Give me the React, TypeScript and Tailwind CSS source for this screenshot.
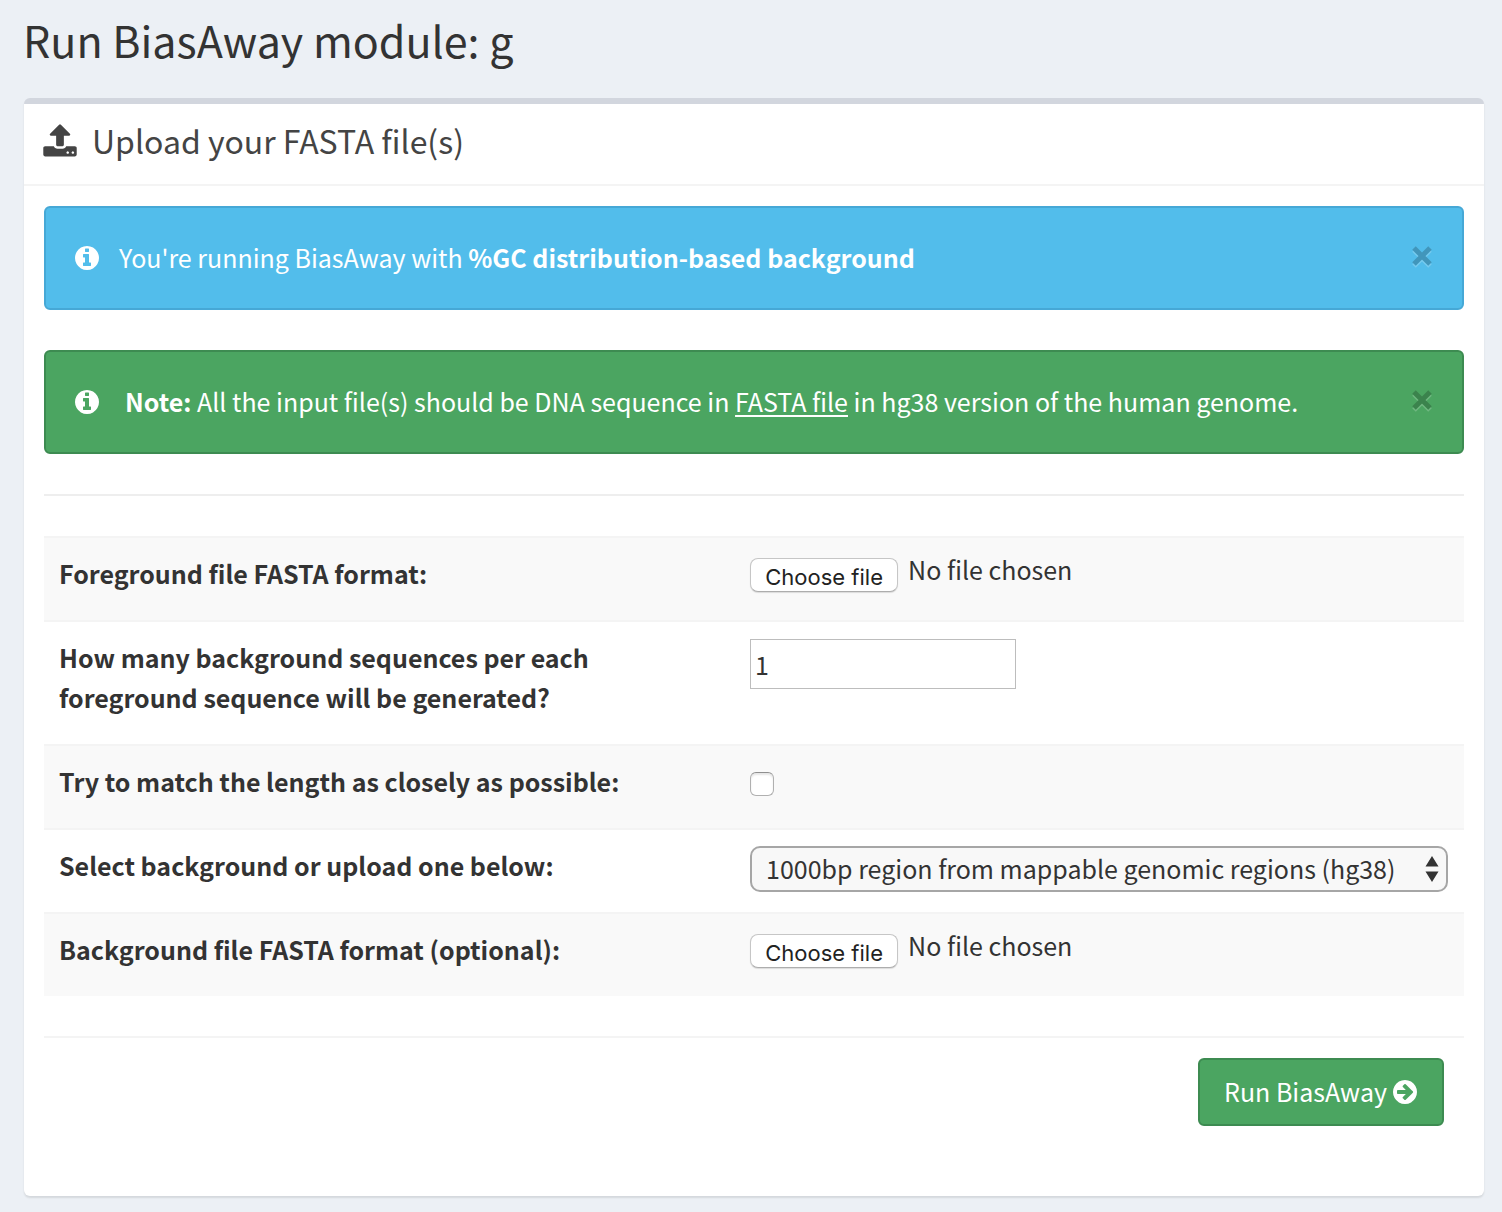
import { useRef, useState, type ReactNode } from "react";

const CIRCLE =
  "M1664 896q0 209-103 385.5t-279.5 279.5-385.5 103-385.5-103-279.5-279.5-103-385.5 103-385.5 279.5-279.5 385.5-103 385.5 103 279.5 279.5 103 385.5z";

const INFO =
  "M1152 1376v-160q0-14-9-23t-23-9h-96v-512q0-14-9-23t-23-9h-320q-14 0-23 9t-9 23v160q0 14 9 23t23 9h96v320h-96q-14 0-23 9t-9 23v160q0 14 9 23t23 9h448q14 0 23-9t9-23zM1024 480v-160q0-14-9-23t-23-9h-192q-14 0-23 9t-9 23v160q0 14 9 23t23 9h192q14 0 23-9t9-23z";

const ARROW =
  "M1413 896q0-27-18-45l-91-91-362-362q-18-18-45-18t-45 18l-91 91q-18 18-18 45t18 45l189 189h-502q-26 0-45 19t-19 45v128q0 26 19 45t45 19h502l-189 189q-19 19-19 45t19 45l91 91q18 18 45 18t45-18l362-362 91-91q18-18 18-45z";

const UPLOAD =
  "M1344 1472q0-26-19-45t-45-19-45 19-19 45 19 45 45 19 45-19 19-45zm256 0q0-26-19-45t-45-19-45 19-19 45 19 45 45 19 45-19 19-45zm128-224v320q0 40-28 68t-68 28h-1472q-40 0-68-28t-28-68v-320q0-40 28-68t68-28h427q21 56 70.5 92t110.5 36h256q61 0 110.5-36t70.5-92h427q40 0 68 28t28 68zm-325-648q-17 40-59 40h-256v448q0 26-19 45t-45 19h-256q-26 0-45-19t-19-45v-448h-256q-42 0-59-40-17-39 14-69l448-448q18-19 45-19t45 19l448 448q31 30 14 69z";

function Icon({ d, className }: { d: string; className: string }) {
  return (
    <svg viewBox="0 0 1792 1792" fill="currentColor" fillRule="evenodd" aria-hidden="true" className={className}>
      <path d={d} />
    </svg>
  );
}

function Alert({ tone, children }: { tone: string; children: ReactNode }) {
  const [open, setOpen] = useState(true);
  if (!open) return null;
  return (
    <div
      role="alert"
      className={`mb-10 flex min-h-26 items-center rounded-md border-2 pr-7 pl-[27px] text-[25px] leading-10 text-white ${tone}`}
    >
      <Icon d={CIRCLE + INFO} className="size-7 shrink-0" />
      <div className="flex-1 pb-0.5">{children}</div>
      <button
        type="button"
        aria-label="Close"
        onClick={() => setOpen(false)}
        className="mb-1 cursor-pointer text-black opacity-20"
      >
        <svg viewBox="0 0 24 24" className="size-6 drop-shadow-[0_2px_0_#fff]" stroke="currentColor" strokeWidth="5" aria-hidden="true">
          <path d="M4 4l16 16M20 4L4 20" />
        </svg>
      </button>
    </div>
  );
}

function FilePicker({ id }: { id: string }) {
  const input = useRef<HTMLInputElement>(null);
  const [name, setName] = useState("No file chosen");
  return (
    <div className="flex items-start gap-[10px]">
      <input
        ref={input}
        id={id}
        type="file"
        className="hidden"
        onChange={(e) => setName(e.target.files?.[0]?.name ?? "No file chosen")}
      />
      <button
        type="button"
        onClick={() => input.current?.click()}
        className="mt-1 h-[34px] w-[148px] rounded-lg border border-[#c6c6c6] border-b-[#adadad] bg-white pt-[3px] font-[Inter,sans-serif] text-[22px] leading-7 text-[#222] shadow-[0_1px_1px_rgba(0,0,0,0.12)]"
      >
        Choose file
      </button>
      <span className="leading-[30px]">{name}</span>
    </div>
  );
}

function Row({ id, label, children }: { id: string; label: string; children: ReactNode }) {
  return (
    <tr className="border-t-2 border-[#f4f4f4] odd:bg-[#f9f9f9]">
      <th scope="row" className="pt-[15px] pr-4 pb-[17px] pl-[15px] text-left align-top font-bold">
        <label htmlFor={id} className="mb-[10px] block max-w-[600px] leading-10">
          {label}
        </label>
      </th>
      <td className="p-4 align-top">{children}</td>
    </tr>
  );
}

export default function App() {
  return (
    <main className="min-h-screen bg-[#ecf0f5] pt-[13px] pr-[18px] pb-4 pl-6 font-['Noto_Sans_CJK_SC',sans-serif] text-[25px] text-[#333]">
      <h1 className="mb-[33px] -ml-px text-[43px] leading-[52px]">Run BiasAway module: g</h1>
      <section className="rounded-md border-t-6 border-[#d2d6de] bg-white shadow-[0_2px_2px_rgba(0,0,0,0.1)]">
        <header className="flex h-[82px] items-center gap-[14px] border-b-2 border-[#f4f4f4] px-[18px] pb-[6px] text-[#444]">
          <Icon d={UPLOAD} className="size-9" />
          <h2 className="pb-0.5 text-[32px] leading-9">Upload your FASTA file(s)</h2>
        </header>
        <form className="px-5 pt-5 pb-[70px]" onSubmit={(e) => e.preventDefault()}>
          <Alert tone="border-[#46a8d6] bg-[#52bdeb]">
            <p className="pl-[18px]">
              You're running BiasAway with <b>%GC distribution-based background</b>
            </p>
          </Alert>
          <Alert tone="border-[#3d8b51] bg-[#4ba561]">
            <p className="pl-6">
              <b>Note:</b> All the input file(s) should be DNA sequence in{" "}
              <a href="#fasta" className="underline decoration-2 underline-offset-3">
                FASTA file
              </a>{" "}
              in hg38 version of the human genome.
            </p>
          </Alert>
          <hr className="mb-10 border-t-2 border-[#eee]" />
          <table className="mb-10 w-full table-fixed border-collapse">
            <colgroup>
              <col className="w-[48.6%]" />
              <col />
            </colgroup>
            <tbody>
              <Row id="foreground" label="Foreground file FASTA format:">
                <FilePicker id="foreground" />
              </Row>
              <Row id="count" label="How many background sequences per each foreground sequence will be generated?">
                <input
                  id="count"
                  type="text"
                  inputMode="numeric"
                  defaultValue="1"
                  className="mt-px block h-[50px] w-[266px] border border-[#bdbdbd] bg-white px-1 leading-10"
                />
              </Row>
              <Row id="length" label="Try to match the length as closely as possible:">
                <input
                  id="length"
                  type="checkbox"
                  className="mt-[10px] block size-6 appearance-none rounded-md border border-[#b0b0b0] border-t-[#8f8f8f] bg-white shadow-[inset_0_2px_2px_rgba(0,0,0,0.1)] checked:bg-[#3b82f6]"
                />
              </Row>
              <Row id="background" label="Select background or upload one below:">
                <div className="relative">
                  <select
                    id="background"
                    className="block h-[46px] w-full appearance-none rounded-[10px] border-2 border-[#a6a6a6] bg-[#f8f8f8] pr-10 pb-0.5 pl-[14px] leading-10"
                  >
                    <option>1000bp region from mappable genomic regions (hg38)</option>
                  </select>
                  <svg
                    viewBox="0 0 14 26"
                    fill="#333"
                    aria-hidden="true"
                    className="pointer-events-none absolute top-[10px] right-[9px] h-[26px] w-[14px]"
                  >
                    <path d="M7 0l6.500 10.500H.5zM7 26L.5 15.500h13z" />
                  </svg>
                </div>
              </Row>
              <Row id="custom" label="Background file FASTA format (optional):">
                <FilePicker id="custom" />
              </Row>
            </tbody>
          </table>
          <hr className="mb-5 border-t-2 border-[#f4f4f4]" />
          <div className="flex justify-end pr-5">
            <button
              type="submit"
              className="flex h-[68px] items-center gap-1 rounded-md border-2 border-[#3d8b51] bg-[#4ba561] pr-[23px] pl-6 leading-10 text-white"
            >
              <span className="pb-0.5">Run BiasAway</span>
              <Icon d={CIRCLE + ARROW} className="size-7" />
            </button>
          </div>
        </form>
      </section>
    </main>
  );
}
